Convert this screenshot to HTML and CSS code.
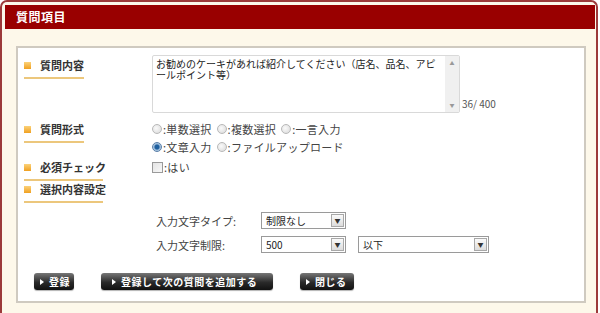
FILE: index.html
```html
<!DOCTYPE html>
<html lang="ja">
<head>
  <meta charset="UTF-8">
  <title>質問項目</title>
  <link rel="stylesheet" href="styles.css">
</head>
<body>
  <div class="frame">
    <div class="header">質問項目</div>

    <div class="panel">
      <div class="row row-content">
        <div class="label"><span class="mark"></span>質問内容</div>
        <div class="field">
          <div class="textarea">
            <div class="textarea-text">お勧めのケーキがあれば紹介してください（店名、品名、アピールポイント等）</div>
            <div class="scrollbar">
              <span class="arrow">▲</span>
              <span class="arrow">▼</span>
            </div>
          </div>
          <span class="counter">36/ 400</span>
        </div>
      </div>

      <div class="row row-type">
        <div class="label"><span class="mark"></span>質問形式</div>
        <div class="field options">
          <div class="option-line">
            <label class="option"><span class="radio"></span>:単数選択</label>
            <label class="option"><span class="radio"></span>:複数選択</label>
            <label class="option"><span class="radio"></span>:一言入力</label>
          </div>
          <div class="option-line">
            <label class="option"><span class="radio checked"></span>:文章入力</label>
            <label class="option"><span class="radio"></span>:ファイルアップロード</label>
          </div>
        </div>
      </div>

      <div class="row row-check">
        <div class="label"><span class="mark"></span>必須チェック</div>
        <div class="field">
          <label class="option"><span class="checkbox"></span>:はい</label>
        </div>
      </div>

      <div class="row row-setting">
        <div class="label"><span class="mark"></span>選択内容設定</div>
      </div>

      <div class="settings">
        <div class="setting-line">
          <span class="setting-name">入力文字タイプ:</span>
          <div class="select select-short"><span class="select-value">制限なし</span><span class="select-btn">▼</span></div>
        </div>
        <div class="setting-line">
          <span class="setting-name">入力文字制限:</span>
          <div class="select select-mid"><span class="select-value">500</span><span class="select-btn">▼</span></div>
          <div class="select select-long"><span class="select-value">以下</span><span class="select-btn">▼</span></div>
        </div>
      </div>

      <div class="buttons">
        <button class="btn btn-save">登録</button>
        <button class="btn btn-next">登録して次の質問を追加する</button>
        <button class="btn btn-close">閉じる</button>
      </div>
    </div>
  </div>
</body>
</html>
```

FILE: styles.css
```css
* {
  margin: 0;
  padding: 0;
  box-sizing: border-box;
}

body {
  font-family: "Noto Sans CJK JP", "DejaVu Sans", sans-serif;
  font-size: 11px;
  color: #333;
  background: #fff;
  overflow: hidden;
}

.frame {
  width: 598px;
  height: 313px;
  border: 2px solid #9c3a3a;
  border-bottom: none;
  border-radius: 7px 7px 0 0;
  background: #fdf8ea;
  padding: 3px 1px 0 3px;
}

.header {
  height: 24px;
  background: #990000;
  color: #fff;
  font-weight: bold;
  font-size: 12px;
  line-height: 24px;
  padding-left: 11px;
  letter-spacing: 0.5px;
}

.panel {
  margin: 17px 9px 0 11px;
  height: 257px;
  background: #fff;
  border: 2px solid #cfcac0;
  padding: 7px 0 0 6px;
}

.row {
  display: flex;
}

.label {
  width: 128px;
  flex-shrink: 0;
  display: flex;
  align-items: center;
  height: 16px;
  font-weight: bold;
  font-size: 11px;
  color: #333;
  position: relative;
}

.label::after {
  content: "";
  position: absolute;
  left: 0;
  bottom: -6px;
  height: 2px;
  width: var(--line, 60px);
  background: #ecc77c;
}

.row-content .label { --line: 60px; }
.row-type .label { --line: 60px; }
.row-check .label { --line: 79px; }
.row-setting .label { --line: 79px; }

.mark {
  width: 7px;
  height: 7px;
  background: linear-gradient(#fbd27a, #f0a020);
  margin-right: 9px;
}

.field {
  display: flex;
  align-items: flex-end;
}

.row-content .label {
  margin-top: 2px;
}

.textarea {
  width: 308px;
  height: 58px;
  border: 1px solid #d9d9d9;
  border-radius: 2px;
  display: flex;
}

.textarea-text {
  flex: 1;
  padding: 2px 3px;
  font-size: 10px;
  line-height: 11px;
  color: #222;
}

.scrollbar {
  width: 14px;
  background: #f0f0f0;
  display: flex;
  flex-direction: column;
  justify-content: space-between;
  align-items: center;
  padding: 3px 0;
}

.arrow {
  font-size: 5px;
  color: #999;
  line-height: 8px;
}

.counter {
  margin-left: 2px;
  font-size: 10px;
  color: #555;
  line-height: 12px;
  margin-bottom: 3px;
}

.row-type {
  margin-top: 8px;
}

.options {
  flex-direction: column;
  align-items: flex-start;
  gap: 2px;
}

.option-line {
  display: flex;
  gap: 5px;
  height: 16px;
  align-items: center;
}

.option {
  display: flex;
  align-items: center;
  font-size: 11px;
  color: #444;
  letter-spacing: 0.3px;
}

.radio {
  width: 10px;
  height: 10px;
  border-radius: 50%;
  border: 1px solid #b8b8b8;
  background: radial-gradient(circle at 40% 40%, #fafafa, #d8d8d8);
  margin-right: 1px;
}

.radio.checked {
  border-color: #5a7fa8;
  background: radial-gradient(circle, #1e5f9e 0 2px, #8fb3d6 3px, #dde8f2 5px);
}

.checkbox {
  width: 11px;
  height: 11px;
  border: 1px solid #9a9a9a;
  background: linear-gradient(135deg, #e4e4e4, #f8f8f8);
  margin-right: 1px;
}

.row-check {
  margin-top: 4px;
}

.row-check .field {
  height: 16px;
  align-items: center;
}

.row-setting {
  margin-top: 6px;
}

.settings {
  padding-left: 132px;
  margin-top: 15px;
  display: flex;
  flex-direction: column;
  gap: 7px;
}

.setting-line {
  display: flex;
  align-items: center;
  height: 17px;
}

.setting-name {
  width: 105px;
  color: #444;
  font-size: 11px;
}

.select {
  height: 17px;
  border: 1px solid #9a9a9a;
  display: flex;
  align-items: center;
  justify-content: space-between;
  padding: 0 1px 0 4px;
  background: #fff;
}

.select-value {
  font-size: 10px;
  color: #222;
}

.select-btn {
  width: 13px;
  height: 13px;
  border: 1px solid #a8a8a8;
  background: linear-gradient(#fafafa, #dcdcdc);
  font-size: 6px;
  line-height: 11px;
  text-align: center;
  color: #333;
}

.select-short { width: 85px; }
.select-mid { width: 85px; }
.select-long { width: 131px; margin-left: 12px; }

.buttons {
  display: flex;
  gap: 27px;
  padding-left: 10px;
  margin-top: 20px;
}

.btn {
  height: 17px;
  border: none;
  border-radius: 3px;
  background: linear-gradient(#777, #2a2a2a 55%, #111);
  box-shadow: 0 1px 1px rgba(0, 0, 0, 0.3);
  color: #fff;
  font-family: inherit;
  font-weight: bold;
  font-size: 10px;
  line-height: 17px;
  text-align: left;
  padding-left: 15px;
  position: relative;
  letter-spacing: 0.5px;
}

.btn::before {
  content: "";
  position: absolute;
  left: 6px;
  top: 6px;
  border-left: 4px solid #fff;
  border-top: 3px solid transparent;
  border-bottom: 3px solid transparent;
}

.btn-save { width: 40px; }
.btn-next { width: 172px; padding-left: 20px; }
.btn-next::before { left: 11px; }
.btn-close { width: 54px; }
```
